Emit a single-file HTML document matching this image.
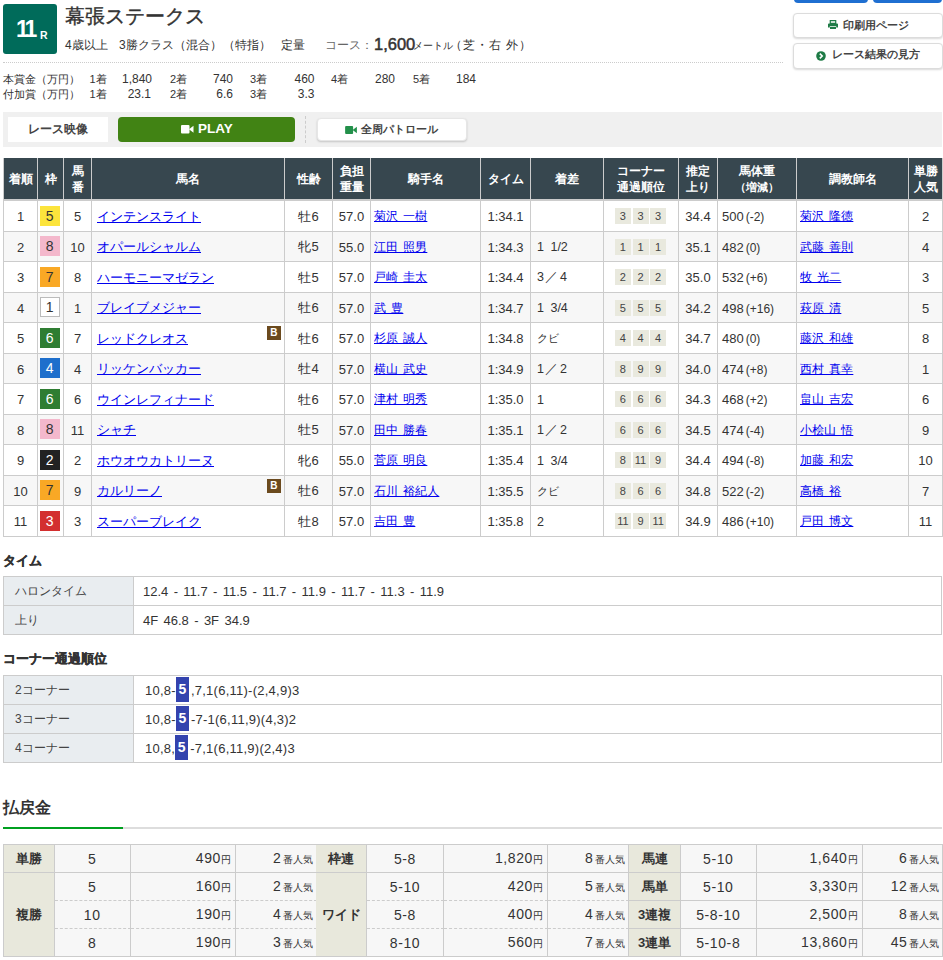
<!DOCTYPE html>
<html lang="ja">
<head>
<meta charset="utf-8">
<style>
*{box-sizing:border-box;margin:0;padding:0}
html,body{width:943px;height:960px;overflow:hidden;background:#fff}
body{font-family:"Liberation Sans",sans-serif;color:#333;position:relative;font-size:13px}
.abs{position:absolute}
#rno{left:3px;top:4px;width:54px;height:50px;background:#006b5a;border-radius:3px;color:#fff;font-weight:bold}
#rno .n{position:absolute;left:13px;top:10px;font-size:23px;letter-spacing:-3px;line-height:30px}
#rno .r{position:absolute;left:37px;top:24px;font-size:10.5px;line-height:14px}
#title{left:65px;top:3px;font-size:20px;line-height:26px;white-space:nowrap;-webkit-text-stroke:0.4px #333}
#sub{left:65px;top:36px;font-size:12px;line-height:18px;white-space:nowrap;height:18px;width:700px}
#sub span{position:absolute;top:0;white-space:nowrap}
#sub .g{color:#666}
#sub .big{font-size:16.5px;font-weight:normal;-webkit-text-stroke:0.5px #333;top:-3.5px;line-height:22px}
#sub .sm{font-size:10px;top:1px}
#dot{left:3px;top:62px;width:780px;border-top:1px dotted #ccc}
.pz{position:absolute;font-size:11px;line-height:16px;white-space:nowrap}
.pv{position:absolute;font-size:12px;line-height:16px;white-space:nowrap;text-align:right;width:60px}
.topbtn{position:absolute;top:-20px;height:23px;background:#1f6fd1;border-radius:4px}
.btn{position:absolute;background:#fff;border:1px solid #dcdcdc;border-radius:4px;box-shadow:0 1px 2px rgba(0,0,0,.15);font-weight:bold;font-size:12px;text-align:center;color:#333;white-space:nowrap}
.bt{position:absolute;top:-1px;color:#444;font-size:11px}
#bar{left:3px;top:112px;width:939px;height:35px;background:#f0f0f0}
#vlabel{left:8px;top:117px;width:100px;height:25px;background:#fff;font-size:12px;font-weight:bold;line-height:25px;text-align:center;color:#444}
#play{left:118px;top:117px;width:177px;height:24.5px;background:#418314;border-radius:4px;color:#fff;font-weight:bold;font-size:13.5px;line-height:24px;text-align:center}
#sep{left:305px;top:116px;height:27px;border-left:1px dashed #ccc}
#patrol{left:317px;top:118px;width:150px;height:23px;line-height:21px;border-color:#e6e6e6;box-shadow:0 1px 2px rgba(0,0,0,.18)}
table.res{position:absolute;left:3px;top:158px;border-collapse:separate;border-spacing:0;table-layout:fixed;width:939px;border-left:1px solid #ccc}
table.res th{background:#37474f;color:#fff;font-weight:bold;font-size:12px;line-height:16px;padding-top:1px!important;height:43px;border-right:1px solid #ccc;border-bottom:2px solid #ccc;text-align:center;vertical-align:middle;padding:0}
table.res th small{font-size:10.5px}
table.res td{height:30.515px;padding-top:2px!important;border-right:1px solid #ccc;border-bottom:1px solid #ccc;text-align:center;vertical-align:middle;font-size:13px;white-space:nowrap;padding:0}
table.res tr:nth-child(odd) td{background:#f7f7f7}
table.res a{color:#0000ee;text-decoration:underline}
td.hn{text-align:left!important;padding-left:5px!important;position:relative}
td.jk{text-align:left!important;padding-left:3px!important;font-size:12px!important;word-spacing:2px}
td.mg{text-align:left!important;padding-left:6px!important;word-spacing:3px;font-size:12.5px!important;padding-top:1px!important}
td.cn,td.wk{padding-top:0!important}
td.wk{padding-right:1.5px!important}
td.hw{text-align:left!important;padding-left:4px!important}
td.hw small{font-size:12px;margin-left:2px}
.bl{position:absolute;right:3px;top:3px;width:14.5px;height:14px;background:#6b4a1e;color:#fff;font-size:10px;line-height:14px;text-align:center;font-weight:bold}
td.wk span{display:inline-block;width:20px;height:20px;line-height:20px;font-size:14px;vertical-align:middle;position:relative;top:-1px}
.w1{background:#fff;border:1px solid #bbb;line-height:18px!important}
.w2{background:#222;color:#fff}
.w3{background:#d32f2f;color:#fff}
.w4{background:#1e6fcc;color:#fff}
.w5{background:#fce43c}
.w6{background:#2e7d32;color:#fff}
.w7{background:#f9a825}
.w8{background:#f4b8cc}
td.cn i{font-style:normal;display:inline-block;width:16px;height:16px;line-height:16px;font-size:11px;background:#e9e9de;margin:0 0.8px;vertical-align:middle;color:#444;position:relative;top:-1px}
td.cn{padding-right:1px!important}
h3{position:absolute;left:3px;font-size:13px;font-weight:bold;line-height:18px;white-space:nowrap;-webkit-text-stroke:0.3px #333}
table.st{position:absolute;left:3px;width:939px;border-collapse:separate;border-spacing:0;border-top:1px solid #ccc;border-left:1px solid #ccc;table-layout:fixed}
table.st th{width:130px;background:#e9edf0;font-weight:normal;text-align:left;padding-left:11px;font-size:12px;color:#444;border-right:1px solid #ccc;border-bottom:1px solid #ccc}
table.st td{text-align:left;padding-left:9px;font-size:13px;word-spacing:1.75px;border-right:1px solid #ccc;border-bottom:1px solid #ccc;white-space:nowrap}
table.st td.cr{letter-spacing:0.25px;padding-top:2px;padding-left:11px}
.hl{display:inline-block;background:#3343ae;color:#fff;font-weight:bold;width:13px;text-align:center;height:25px;line-height:25px;vertical-align:middle;font-size:14px;margin:-2px 2px 0 0;letter-spacing:0;position:relative;top:-1px}
#payh{left:3px;top:797px;font-size:16px;font-weight:bold;line-height:22px}
#payl1{left:3px;top:827px;width:120px;height:2px;background:#00a020}
#payl2{left:123px;top:827px;width:819px;height:2px;background:#ddd}
table.pay{position:absolute;top:844px;border-collapse:separate;border-spacing:0;table-layout:fixed;border-top:1px solid #ccc;border-left:1px solid #ccc}
table.pay th{background:#e8e8dc;font-weight:bold;font-size:13px;border-right:1px solid #ccc;border-bottom:1px solid #ccc;height:28px}
table.pay td{background:#f7f7f7;font-size:14px;letter-spacing:0.6px;border-right:1px solid #ccc;border-bottom:1px solid #ccc;height:28px;white-space:nowrap}
table.pay td.c{text-align:center}
table.pay td.a{text-align:right;padding-right:4px}
table.pay td.p{text-align:right;padding-right:3px}
table.pay td.p small{margin-left:1.5px}
table.pay small{font-size:10px;letter-spacing:0}
table.pay tr.d td{border-bottom:1px dashed #ccc}
</style>
</head>
<body>
<div id="rno" class="abs"><span class="n">11</span><span class="r">R</span></div>
<div id="title" class="abs">幕張ステークス</div>
<div id="sub" class="abs">
<span style="left:0">4歳以上</span><span style="left:54px">3勝クラス（混合）</span><span style="left:158px">（特指）</span><span style="left:216px">定量</span><span class="g" style="left:260px">コース：</span><span class="big" style="left:309px">1,600</span><span class="sm" style="left:348px">メートル</span><span style="left:385px;letter-spacing:1px">（芝・右&nbsp;外）</span></div>
<div id="dot" class="abs"></div>

<div class="topbtn" style="left:793.5px;width:74px"></div>
<div class="topbtn" style="left:873px;width:69px"></div>
<div class="btn" style="left:793px;top:13px;width:150px;height:24.5px;line-height:22px"><svg style="position:absolute;left:33.5px;top:6px" width="10" height="9.5" viewBox="0 0 11 10"><path d="M2.5 0.5h6v3h-6z" fill="none" stroke="#1e7b46" stroke-width="1.3"/><path d="M0 4.5q0-1 1-1h9q1 0 1 1v3.5h-2v-1.5h-7v1.5h-2z M2.2 7.2h6.6v2.6h-6.6z" fill="#1e7b46"/></svg><span class="bt" style="left:49px;top:-0.5px">印刷用ページ</span></div>
<div class="btn" style="left:793px;top:43px;width:150px;height:25.5px;line-height:23px"><svg style="position:absolute;left:22px;top:6.5px" width="10" height="10" viewBox="0 0 10 10"><circle cx="5" cy="5" r="4.8" fill="#1e7b46"/><path d="M3.8 2.6l2.4 2.4-2.4 2.4" fill="none" stroke="#fff" stroke-width="1.6"/></svg><span class="bt" style="left:37.5px;letter-spacing:0.1px">レース結果の見方</span></div>

<div class="pz" style="left:3px;top:70.5px">本賞金（万円）</div>
<div class="pz" style="left:3px;top:85.5px">付加賞（万円）</div>
<div class="pz" style="left:89.5px;top:70.5px">1着</div><div class="pv" style="left:92px;top:70.5px">1,840</div>
<div class="pz" style="left:170px;top:70.5px">2着</div><div class="pv" style="left:173px;top:70.5px">740</div>
<div class="pz" style="left:250px;top:70.5px">3着</div><div class="pv" style="left:254.5px;top:70.5px">460</div>
<div class="pz" style="left:331px;top:70.5px">4着</div><div class="pv" style="left:335px;top:70.5px">280</div>
<div class="pz" style="left:413px;top:70.5px">5着</div><div class="pv" style="left:416px;top:70.5px">184</div>
<div class="pz" style="left:89.5px;top:85.5px">1着</div><div class="pv" style="left:91px;top:85.5px">23.1</div>
<div class="pz" style="left:170px;top:85.5px">2着</div><div class="pv" style="left:173px;top:85.5px">6.6</div>
<div class="pz" style="left:250px;top:85.5px">3着</div><div class="pv" style="left:254.5px;top:85.5px">3.3</div>

<div id="bar" class="abs"></div>
<div id="vlabel" class="abs">レース映像</div>
<div id="play" class="abs"><svg style="position:absolute;left:63px;top:8.3px" width="12.5" height="8.5" viewBox="0 0 12.5 8.5"><rect x="0" y="0" width="8.5" height="8.5" rx="1" fill="#fff"/><path d="M8 4.25L12.5 0.8V7.7z" fill="#fff"/></svg><span style="position:absolute;left:80px;top:0">PLAY</span></div>
<div id="sep" class="abs"></div>
<div id="patrol" class="btn"><svg style="position:absolute;left:27px;top:6.5px" width="12" height="8" viewBox="0 0 12.5 8.5"><rect x="0" y="0" width="8.5" height="8.5" rx="1" fill="#23904a"/><path d="M8 4.25L12.5 0.8V7.7z" fill="#23904a"/></svg><span class="bt" style="left:43px;top:0">全周パトロール</span></div>

<table class="res">
<colgroup>
<col style="width:34px"><col style="width:26px"><col style="width:28px"><col style="width:193px"><col style="width:48px"><col style="width:38px"><col style="width:110px"><col style="width:50px"><col style="width:73px"><col style="width:75px"><col style="width:39px"><col style="width:79px"><col style="width:112px"><col style="width:34px">
</colgroup>
<tr><th>着順</th><th>枠</th><th>馬<br>番</th><th>馬名</th><th>性齢</th><th>負担<br>重量</th><th>騎手名</th><th>タイム</th><th>着差</th><th>コーナー<br>通過順位</th><th>推定<br>上り</th><th>馬体重<br><small>（増減）</small></th><th>調教師名</th><th>単勝<br>人気</th></tr>
<tr><td class="pl">1</td><td class="wk"><span class="w5">5</span></td><td>5</td><td class="hn"><a>インテンスライト</a></td><td>牡6</td><td>57.0</td><td class="jk"><a>菊沢 一樹</a></td><td class="tm">1:34.1</td><td class="mg"></td><td class="cn"><i>3</i><i>3</i><i>3</i></td><td>34.4</td><td class="hw">500<small>(-2)</small></td><td class="jk"><a>菊沢 隆徳</a></td><td>2</td></tr>
<tr><td class="pl">2</td><td class="wk"><span class="w8">8</span></td><td>10</td><td class="hn"><a>オパールシャルム</a></td><td>牝5</td><td>55.0</td><td class="jk"><a>江田 照男</a></td><td class="tm">1:34.3</td><td class="mg">1 1/2</td><td class="cn"><i>1</i><i>1</i><i>1</i></td><td>35.1</td><td class="hw">482<small>(0)</small></td><td class="jk"><a>武藤 善則</a></td><td>4</td></tr>
<tr><td class="pl">3</td><td class="wk"><span class="w7">7</span></td><td>8</td><td class="hn"><a>ハーモニーマゼラン</a></td><td>牡5</td><td>57.0</td><td class="jk"><a>戸崎 圭太</a></td><td class="tm">1:34.4</td><td class="mg"><span style="letter-spacing:1.5px">3／4</span></td><td class="cn"><i>2</i><i>2</i><i>2</i></td><td>35.0</td><td class="hw">532<small>(+6)</small></td><td class="jk"><a>牧 光二</a></td><td>3</td></tr>
<tr><td class="pl">4</td><td class="wk"><span class="w1">1</span></td><td>1</td><td class="hn"><a>ブレイブメジャー</a></td><td>牡6</td><td>57.0</td><td class="jk"><a>武 豊</a></td><td class="tm">1:34.7</td><td class="mg">1 3/4</td><td class="cn"><i>5</i><i>5</i><i>5</i></td><td>34.2</td><td class="hw">498<small>(+16)</small></td><td class="jk"><a>萩原 清</a></td><td>5</td></tr>
<tr><td class="pl">5</td><td class="wk"><span class="w6">6</span></td><td>7</td><td class="hn"><a>レッドクレオス</a><b class="bl">B</b></td><td>牡6</td><td>57.0</td><td class="jk"><a>杉原 誠人</a></td><td class="tm">1:34.8</td><td class="mg"><span style="font-size:11px">クビ</span></td><td class="cn"><i>4</i><i>4</i><i>4</i></td><td>34.7</td><td class="hw">480<small>(0)</small></td><td class="jk"><a>藤沢 和雄</a></td><td>8</td></tr>
<tr><td class="pl">6</td><td class="wk"><span class="w4">4</span></td><td>4</td><td class="hn"><a>リッケンバッカー</a></td><td>牡4</td><td>57.0</td><td class="jk"><a>横山 武史</a></td><td class="tm">1:34.9</td><td class="mg"><span style="letter-spacing:1.5px">1／2</span></td><td class="cn"><i>8</i><i>9</i><i>9</i></td><td>34.0</td><td class="hw">474<small>(+8)</small></td><td class="jk"><a>西村 真幸</a></td><td>1</td></tr>
<tr><td class="pl">7</td><td class="wk"><span class="w6">6</span></td><td>6</td><td class="hn"><a>ウインレフィナード</a></td><td>牡6</td><td>57.0</td><td class="jk"><a>津村 明秀</a></td><td class="tm">1:35.0</td><td class="mg">1</td><td class="cn"><i>6</i><i>6</i><i>6</i></td><td>34.3</td><td class="hw">468<small>(+2)</small></td><td class="jk"><a>畠山 吉宏</a></td><td>6</td></tr>
<tr><td class="pl">8</td><td class="wk"><span class="w8">8</span></td><td>11</td><td class="hn"><a>シャチ</a></td><td>牡5</td><td>57.0</td><td class="jk"><a>田中 勝春</a></td><td class="tm">1:35.1</td><td class="mg"><span style="letter-spacing:1.5px">1／2</span></td><td class="cn"><i>6</i><i>6</i><i>6</i></td><td>34.5</td><td class="hw">474<small>(-4)</small></td><td class="jk"><a>小桧山 悟</a></td><td>9</td></tr>
<tr><td class="pl">9</td><td class="wk"><span class="w2">2</span></td><td>2</td><td class="hn"><a>ホウオウカトリーヌ</a></td><td>牝6</td><td>55.0</td><td class="jk"><a>菅原 明良</a></td><td class="tm">1:35.4</td><td class="mg">1 3/4</td><td class="cn"><i>8</i><i>11</i><i>9</i></td><td>34.4</td><td class="hw">494<small>(-8)</small></td><td class="jk"><a>加藤 和宏</a></td><td>10</td></tr>
<tr><td class="pl">10</td><td class="wk"><span class="w7">7</span></td><td>9</td><td class="hn"><a>カルリーノ</a><b class="bl">B</b></td><td>牡6</td><td>57.0</td><td class="jk"><a>石川 裕紀人</a></td><td class="tm">1:35.5</td><td class="mg"><span style="font-size:11px">クビ</span></td><td class="cn"><i>8</i><i>6</i><i>6</i></td><td>34.8</td><td class="hw">522<small>(-2)</small></td><td class="jk"><a>高橋 裕</a></td><td>7</td></tr>
<tr><td class="pl">11</td><td class="wk"><span class="w3">3</span></td><td>3</td><td class="hn"><a>スーパーブレイク</a></td><td>牡8</td><td>57.0</td><td class="jk"><a>吉田 豊</a></td><td class="tm">1:35.8</td><td class="mg">2</td><td class="cn"><i>11</i><i>9</i><i>11</i></td><td>34.9</td><td class="hw">486<small>(+10)</small></td><td class="jk"><a>戸田 博文</a></td><td>11</td></tr>
</table>

<h3 style="top:551.5px">タイム</h3>
<table class="st" style="top:576px">
<tr style="height:29px"><th>ハロンタイム</th><td>12.4 - 11.7 - 11.5 - 11.7 - 11.9 - 11.7 - 11.3 - 11.9</td></tr>
<tr style="height:29px"><th>上り</th><td>4F 46.8 - 3F 34.9</td></tr>
</table>

<h3 style="top:649.5px">コーナー通過順位</h3>
<table class="st" style="top:675px">
<tr style="height:29px"><th>2コーナー</th><td class="cr">10,8-<span class="hl">5</span>,7,1(6,11)-(2,4,9)3</td></tr>
<tr style="height:29px"><th>3コーナー</th><td class="cr">10,8-<span class="hl">5</span>-7-1(6,11,9)(4,3)2</td></tr>
<tr style="height:29px"><th>4コーナー</th><td class="cr">10,8,<span class="hl">5</span>-7,1(6,11,9)(2,4)3</td></tr>
</table>

<div id="payh" class="abs">払戻金</div>
<div id="payl1" class="abs"></div>
<div id="payl2" class="abs"></div>

<table class="pay" style="left:3px;width:313px">
<colgroup><col style="width:51px"><col style="width:75.5px"><col style="width:105.5px"><col style="width:81px"></colgroup>
<tr><th>単勝</th><td class="c">5</td><td class="a">490<small>円</small></td><td class="p">2<small>番人気</small></td></tr>
<tr class="d"><th rowspan="3">複勝</th><td class="c">5</td><td class="a">160<small>円</small></td><td class="p">2<small>番人気</small></td></tr>
<tr class="d"><td class="c">10</td><td class="a">190<small>円</small></td><td class="p">4<small>番人気</small></td></tr>
<tr><td class="c">8</td><td class="a">190<small>円</small></td><td class="p">3<small>番人気</small></td></tr>
</table>
<table class="pay" style="left:316px;width:313px;border-left:none">
<colgroup><col style="width:51px"><col style="width:77px"><col style="width:104px"><col style="width:81px"></colgroup>
<tr><th>枠連</th><td class="c">5-8</td><td class="a">1,820<small>円</small></td><td class="p">8<small>番人気</small></td></tr>
<tr class="d"><th rowspan="3">ワイド</th><td class="c">5-10</td><td class="a">420<small>円</small></td><td class="p">5<small>番人気</small></td></tr>
<tr class="d"><td class="c">5-8</td><td class="a">400<small>円</small></td><td class="p">4<small>番人気</small></td></tr>
<tr><td class="c">8-10</td><td class="a">560<small>円</small></td><td class="p">7<small>番人気</small></td></tr>
</table>
<table class="pay" style="left:629px;width:314px;border-left:none">
<colgroup><col style="width:52px"><col style="width:75.5px"><col style="width:106px"><col style="width:80.5px"></colgroup>
<tr><th>馬連</th><td class="c">5-10</td><td class="a">1,640<small>円</small></td><td class="p">6<small>番人気</small></td></tr>
<tr><th>馬単</th><td class="c">5-10</td><td class="a">3,330<small>円</small></td><td class="p">12<small>番人気</small></td></tr>
<tr><th>3連複</th><td class="c">5-8-10</td><td class="a">2,500<small>円</small></td><td class="p">8<small>番人気</small></td></tr>
<tr><th>3連単</th><td class="c">5-10-8</td><td class="a">13,860<small>円</small></td><td class="p">45<small>番人気</small></td></tr>
</table>
</body>
</html>
